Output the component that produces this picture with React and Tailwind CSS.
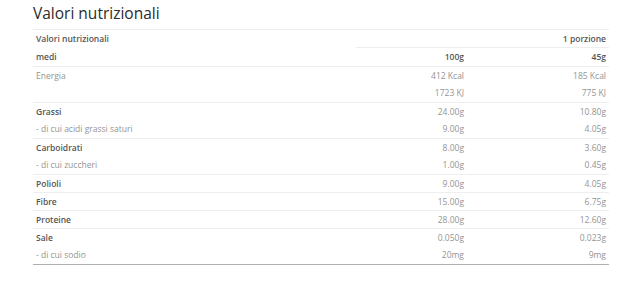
const rows = [
  { lines: [["Energia", "412 Kcal", "185 Kcal"], ["", "1723 KJ", "775 KJ"]] },
  { bold: true, lines: [["Grassi", "24.00g", "10.80g"], ["- di cui acidi grassi saturi", "9.00g", "4.05g"]] },
  { bold: true, lines: [["Carboidrati", "8.00g", "3.60g"], ["- di cui zuccheri", "1.00g", "0.45g"]] },
  { bold: true, lines: [["Polioli", "9.00g", "4.05g"]] },
  { bold: true, lines: [["Fibre", "15.00g", "6.75g"]] },
  { bold: true, lines: [["Proteine", "28.00g", "12.60g"]] },
  { bold: true, lines: [["Sale", "0.050g", "0.023g"], ["- di cui sodio", "20mg", "9mg"]] },
];

function Line({ cells, first, bold }) {
  return (
    <div className={`flex items-center pt-[1px] ${first ? "h-[17px]" : "h-[18px]"}`}>
      <div className={`w-[323px] pl-[3px] ${bold ? "font-semibold text-[#555]" : "text-[#949494]"}`}>{cells[0]}</div>
      <div className="w-[111px] pr-[3px] text-right text-[#949494]">{cells[1]}</div>
      <div className="w-[142px] pr-[3px] text-right text-[#949494]">{cells[2]}</div>
    </div>
  );
}

export default function App() {
  return (
    <div className="w-[640px] h-[281px] bg-white px-[33px] pt-[3px]" style={{ fontFamily: '"Open Sans", sans-serif' }}>
      <h2 className="text-[15.5px] leading-[20px] font-medium text-[#2b2b2b] mb-[6px]">Valori nutrizionali</h2>
      <div className="w-[576px] text-[8.5px] border-t border-[#eee] border-b border-b-[#b0b0b0]">
        <div className="flex items-center h-[18px] pt-[1px] font-semibold text-[#555]">
          <div className="w-[323px] pl-[3px]">Valori nutrizionali</div>
          <div className="flex-1 h-full flex items-center justify-end pr-[3px] border-b border-[#eee]">1 porzione</div>
        </div>
        <div className="flex items-center h-[18px] pt-[1px] font-semibold text-[#555]">
          <div className="w-[323px] pl-[3px]">medi</div>
          <div className="w-[111px] pr-[3px] text-right">100g</div>
          <div className="w-[142px] pr-[3px] text-right">45g</div>
        </div>
        {rows.map((r, i) => (
          <div key={i} className="border-t border-[#eee]">
            {r.lines.map((l, j) => (
              <Line key={j} cells={l} first={j === 0} bold={r.bold && j === 0} />
            ))}
          </div>
        ))}
      </div>
    </div>
  );
}
